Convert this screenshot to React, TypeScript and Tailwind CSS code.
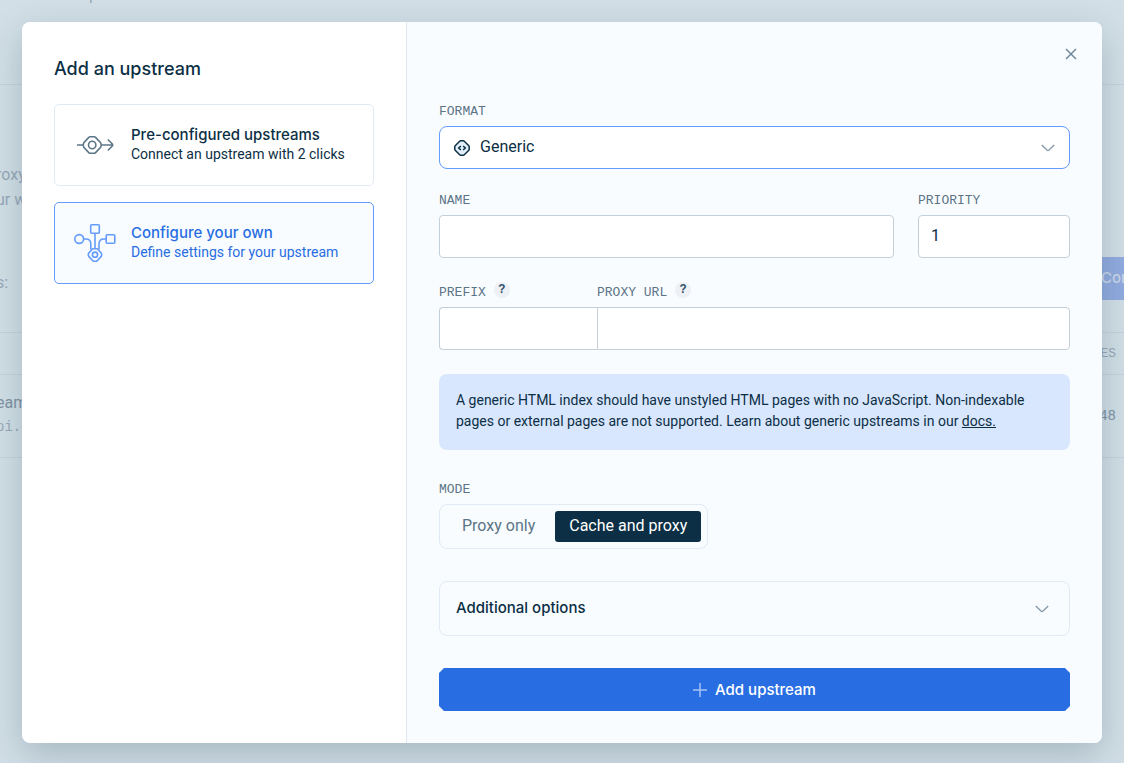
import { useState } from "react";
import type { ReactNode } from "react";

const LABEL = "pt-px font-['Liberation_Mono',monospace] text-[13px] leading-4 text-[#5c7486] uppercase";
const FIELD =
  "h-[43px] w-full min-w-0 border border-[#c3d0d9] bg-white px-3 font-[Roboto,sans-serif] text-base text-[#0c2f45] outline-none";

function Backdrop() {
  return (
    <div
      aria-hidden="true"
      className="absolute inset-0 overflow-hidden bg-[#d2dfe6] font-[Roboto,sans-serif] text-base text-[#98a9b8]"
    >
      <div className="flex h-[85px] justify-start border-b border-[#c5d3dc] pl-[89px]">
        <span className="-mt-[17px] h-6 leading-6">p</span>
      </div>
      <div className="flex h-[248px] items-end justify-between border-b border-[#c5d3dc] pb-8">
        <div className="-ml-1 flex h-[138px] flex-col text-base leading-[25px]">
          <span>roxy</span>
          <span>ur w</span>
          <span className="mt-[58px]">s:</span>
        </div>
        <div className="flex h-[43px] w-[24px] items-center overflow-hidden bg-[#93ace0] pl-px font-[Inter,sans-serif] text-[15px] font-medium text-[#cbd8e6]">
          Con
        </div>
      </div>
      <div className="flex h-[42px] items-center justify-end border-b border-[#c5d3dc] pr-2 font-['Liberation_Mono',monospace] text-[13px]">
        ES
      </div>
      <div className="flex h-[83px] items-center justify-between border-b border-[#c5d3dc] pr-2 text-[#8094a5]">
        <div className="-ml-1 flex flex-col pb-0.5 leading-[25px]">
          <span>eam</span>
          <span className="font-['Liberation_Mono',monospace] text-sm leading-[25px] text-[#98a9b8]">pi.c</span>
        </div>
        <span className="font-['Liberation_Mono',monospace] text-sm">48</span>
      </div>
    </div>
  );
}

function PreconfiguredIcon() {
  return (
    <svg width="42" height="42" viewBox="0 0 42 42" fill="none" stroke="#5c7688" strokeWidth="1.600">
      <path d="M3 21h6.500M27.500 21H39M33.800 15.500l4.300 4.300q1.200 1.200 0 2.400l-4.300 4.300" />
      <path d="M16.200 12.800h4q.8 0 1.400.6l5 5.400q1.400 2.200 0 4.400l-5 5.400q-.6.6-1.400.6h-4q-.8 0-1.400-.6l-5-5.400q-1.400-2.200 0-4.400l5-5.400q.6-.6 1.400-.6z" />
      <circle cx="18.200" cy="21" r="3.700" />
    </svg>
  );
}

function ConfigureIcon() {
  return (
    <svg width="42" height="42" viewBox="0 0 42 42" fill="none" stroke="#659bfa" strokeWidth="1.600">
      <circle cx="5.200" cy="17" r="4.400" />
      <rect x="16.700" y="2.700" width="8.600" height="8.600" rx="1" />
      <rect x="32.200" y="12.700" width="8.600" height="8.600" rx="1" />
      <path d="M21 11.300V26.500M9.600 17h2.200q5 0 5 5v5.500M32.200 17h-2.200q-5 0-5 5v5.500" />
      <path d="M18.800 26.700h4.400l4 4.300q1 1.700 0 3.400l-4 4.300q-.5.600-1.200.6h-2q-.7 0-1.200-.6l-4-4.300q-1-1.700 0-3.400z" />
      <circle cx="21" cy="32.700" r="2.600" />
    </svg>
  );
}

function GenericIcon() {
  return (
    <svg width="18" height="18" viewBox="0 0 18 18" fill="none" stroke="#0c2f45" strokeWidth="1.500">
      <path
        fill="#e2effa"
        d="M7.600 1.800h2.800q.5 0 .9.400l4.500 4.500q.4.400.4.900v2.800q0 .5-.4.900l-4.500 4.500q-.4.400-.9.400H7.600q-.5 0-.9-.4l-4.500-4.500q-.4-.4-.4-.9V7.600q0-.5.400-.9l4.500-4.500q.4-.4.9-.4z"
      />
      <path d="M7.800 7L5.700 9l2.100 2M10.200 7l2.100 2-2.100 2" />
    </svg>
  );
}

function Chevron() {
  return (
    <svg width="14" height="14" viewBox="0 0 14 14" fill="none" stroke="#8298a9" strokeWidth="1.300">
      <path d="M.8 4l5.200 5q1 .9 2 0l5.200-5" />
    </svg>
  );
}

function Help({ label }: { label: string }) {
  return (
    <button
      type="button"
      aria-label={label}
      className="-mt-0.5 flex size-4 items-center justify-center rounded-full bg-[#edf1f5] font-['Liberation_Mono',monospace] text-xs leading-4 font-bold text-[#34536a]"
    >
      ?
    </button>
  );
}

function OptionCard(props: {
  icon: ReactNode;
  title: string;
  text: string;
  selected: boolean;
  onSelect: () => void;
}) {
  return (
    <button
      type="button"
      aria-pressed={props.selected}
      onClick={props.onSelect}
      className={
        "flex h-[82px] w-full items-center gap-[15px] rounded-[5px] border pl-[19px] text-left " +
        (props.selected ? "border-[#659bfa] bg-[#f8fcff] text-[#286ee2]" : "border-[#e1eaf4] bg-white text-[#0c2f45]")
      }
    >
      {props.icon}
      <span className="flex flex-col pb-0.5">
        <span className="font-[Inter,sans-serif] text-[15px] leading-5 font-medium">{props.title}</span>
        <span className="font-[Roboto,sans-serif] text-sm leading-[19px]">{props.text}</span>
      </span>
    </button>
  );
}

export default function App() {
  const [kind, setKind] = useState("own");
  const [mode, setMode] = useState("cache");
  const modes = [
    { id: "proxy", label: "Proxy only" },
    { id: "cache", label: "Cache and proxy" },
  ];

  return (
    <div className="relative min-h-screen p-[22px] pb-5">
      <Backdrop />
      <div
        role="dialog"
        aria-labelledby="dialog-title"
        className="relative grid grid-cols-[385px_minmax(0,1fr)] overflow-hidden rounded-lg bg-white shadow-[0_12px_36px_rgba(12,47,69,0.22)]"
      >
        <div className="flex flex-col gap-4 border-r border-[#e1eaf4] px-8 pt-8">
          <h1
            id="dialog-title"
            className="mb-1.5 pt-0.5 font-[Inter,sans-serif] text-lg leading-[26px] font-medium text-[#0c2f45]"
          >
            Add an upstream
          </h1>
          <OptionCard
            icon={<PreconfiguredIcon />}
            title="Pre-configured upstreams"
            text="Connect an upstream with 2 clicks"
            selected={kind === "pre"}
            onSelect={() => setKind("pre")}
          />
          <OptionCard
            icon={<ConfigureIcon />}
            title="Configure your own"
            text="Define settings for your upstream"
            selected={kind === "own"}
            onSelect={() => setKind("own")}
          />
        </div>

        <form className="flex flex-col bg-[#f8fcff] px-8 pb-8" onSubmit={(e) => e.preventDefault()}>
          <div className="-mr-[11px] flex h-[81px] justify-end pt-[22px]">
            <button type="button" aria-label="Close" className="flex size-5 items-center justify-center">
              <svg width="12" height="12" viewBox="0 0 12 12" fill="none" stroke="#71899b" strokeWidth="1.500">
                <path d="M1 1l10 10M11 1L1 11" />
              </svg>
            </button>
          </div>

          <div className="flex flex-col gap-1.5">
            <label htmlFor="format" className={LABEL}>
              Format
            </label>
            <div className="relative">
              <select
                id="format"
                className="block h-[43px] w-full appearance-none rounded-lg border border-[#659bfa] bg-white pr-10 pb-0.5 pl-10 font-[Roboto,sans-serif] text-base text-[#0c2f45] outline-none"
              >
                <option>Generic</option>
              </select>
              <span className="pointer-events-none absolute inset-y-0 left-3.5 flex items-center">
                <GenericIcon />
              </span>
              <span className="pointer-events-none absolute inset-y-0 right-[15px] flex items-center">
                <Chevron />
              </span>
            </div>
          </div>

          <div className="mt-[23px] grid grid-cols-[minmax(0,1fr)_152px] gap-x-6 gap-y-1.5">
            <label htmlFor="name" className={LABEL}>
              Name
            </label>
            <label htmlFor="priority" className={LABEL}>
              Priority
            </label>
            <input id="name" type="text" className={FIELD + " rounded"} />
            <input id="priority" type="text" defaultValue="1" className={FIELD + " rounded pb-0.5"} />
          </div>

          <div className="mt-[26px] grid grid-cols-[158px_minmax(0,1fr)] gap-y-1.5">
            <div className="flex h-[17px] gap-2">
              <label htmlFor="prefix" className={LABEL}>
                Prefix
              </label>
              <Help label="About prefix" />
            </div>
            <div className="flex h-[17px] gap-2">
              <label htmlFor="url" className={LABEL}>
                Proxy URL
              </label>
              <Help label="About proxy URL" />
            </div>
            <input id="prefix" type="text" className={FIELD + " rounded-l border-r-0"} />
            <input id="url" type="text" className={FIELD + " rounded-r"} />
          </div>

          <p className="mt-6 rounded-lg bg-[#d8e6fe] px-[17px] pt-4 pb-[18px] font-[Roboto,sans-serif] text-sm leading-[21px] text-[#0c2f45]">
            A generic HTML index should have unstyled HTML pages with no JavaScript. Non-indexable pages or external
            pages are not supported. Learn about generic upstreams in our{" "}
            <a href="#docs" className="underline">
              docs.
            </a>
          </p>

          <fieldset className="mt-[31px]">
            <legend className={LABEL}>Mode</legend>
            <div className="mt-1.5 flex h-[45px] w-fit items-center rounded-lg border border-[#e1eaf4] pr-1.5 pl-2">
              {modes.map((m) => (
                <label
                  key={m.id}
                  className={
                    "flex h-[31px] cursor-pointer items-center rounded-[3px] px-3.5 pb-0.5 font-[Roboto,sans-serif] text-base first:mr-1.5 " +
                    (mode === m.id ? "bg-[#0c2f45] text-white" : "text-[#5c7486]")
                  }
                >
                  <input
                    type="radio"
                    name="mode"
                    className="sr-only"
                    checked={mode === m.id}
                    onChange={() => setMode(m.id)}
                  />
                  {m.label}
                </label>
              ))}
            </div>
          </fieldset>

          <button
            type="button"
            aria-expanded="false"
            className="mt-8 flex h-[55px] items-center justify-between rounded-lg border border-[#e1eaf4] pr-5 pl-4 font-[Inter,sans-serif] text-[15px] font-medium text-[#0c2f45]"
          >
            Additional options
            <Chevron />
          </button>

          <button
            type="submit"
            className="mt-8 flex h-[43px] items-center justify-center gap-2 bg-[#286ee2] pt-px font-[Inter,sans-serif] text-[15px] font-medium text-white [clip-path:polygon(5px_0,calc(100%-5px)_0,100%_5px,100%_calc(100%-5px),calc(100%-5px)_100%,5px_100%,0_calc(100%-5px),0_5px)]"
          >
            <svg width="14" height="14" viewBox="0 0 14 14" fill="none" stroke="#a4c3f5" strokeWidth="1.500">
              <path d="M7 0v14M0 7h14" />
            </svg>
            Add upstream
          </button>
        </form>
      </div>
    </div>
  );
}
